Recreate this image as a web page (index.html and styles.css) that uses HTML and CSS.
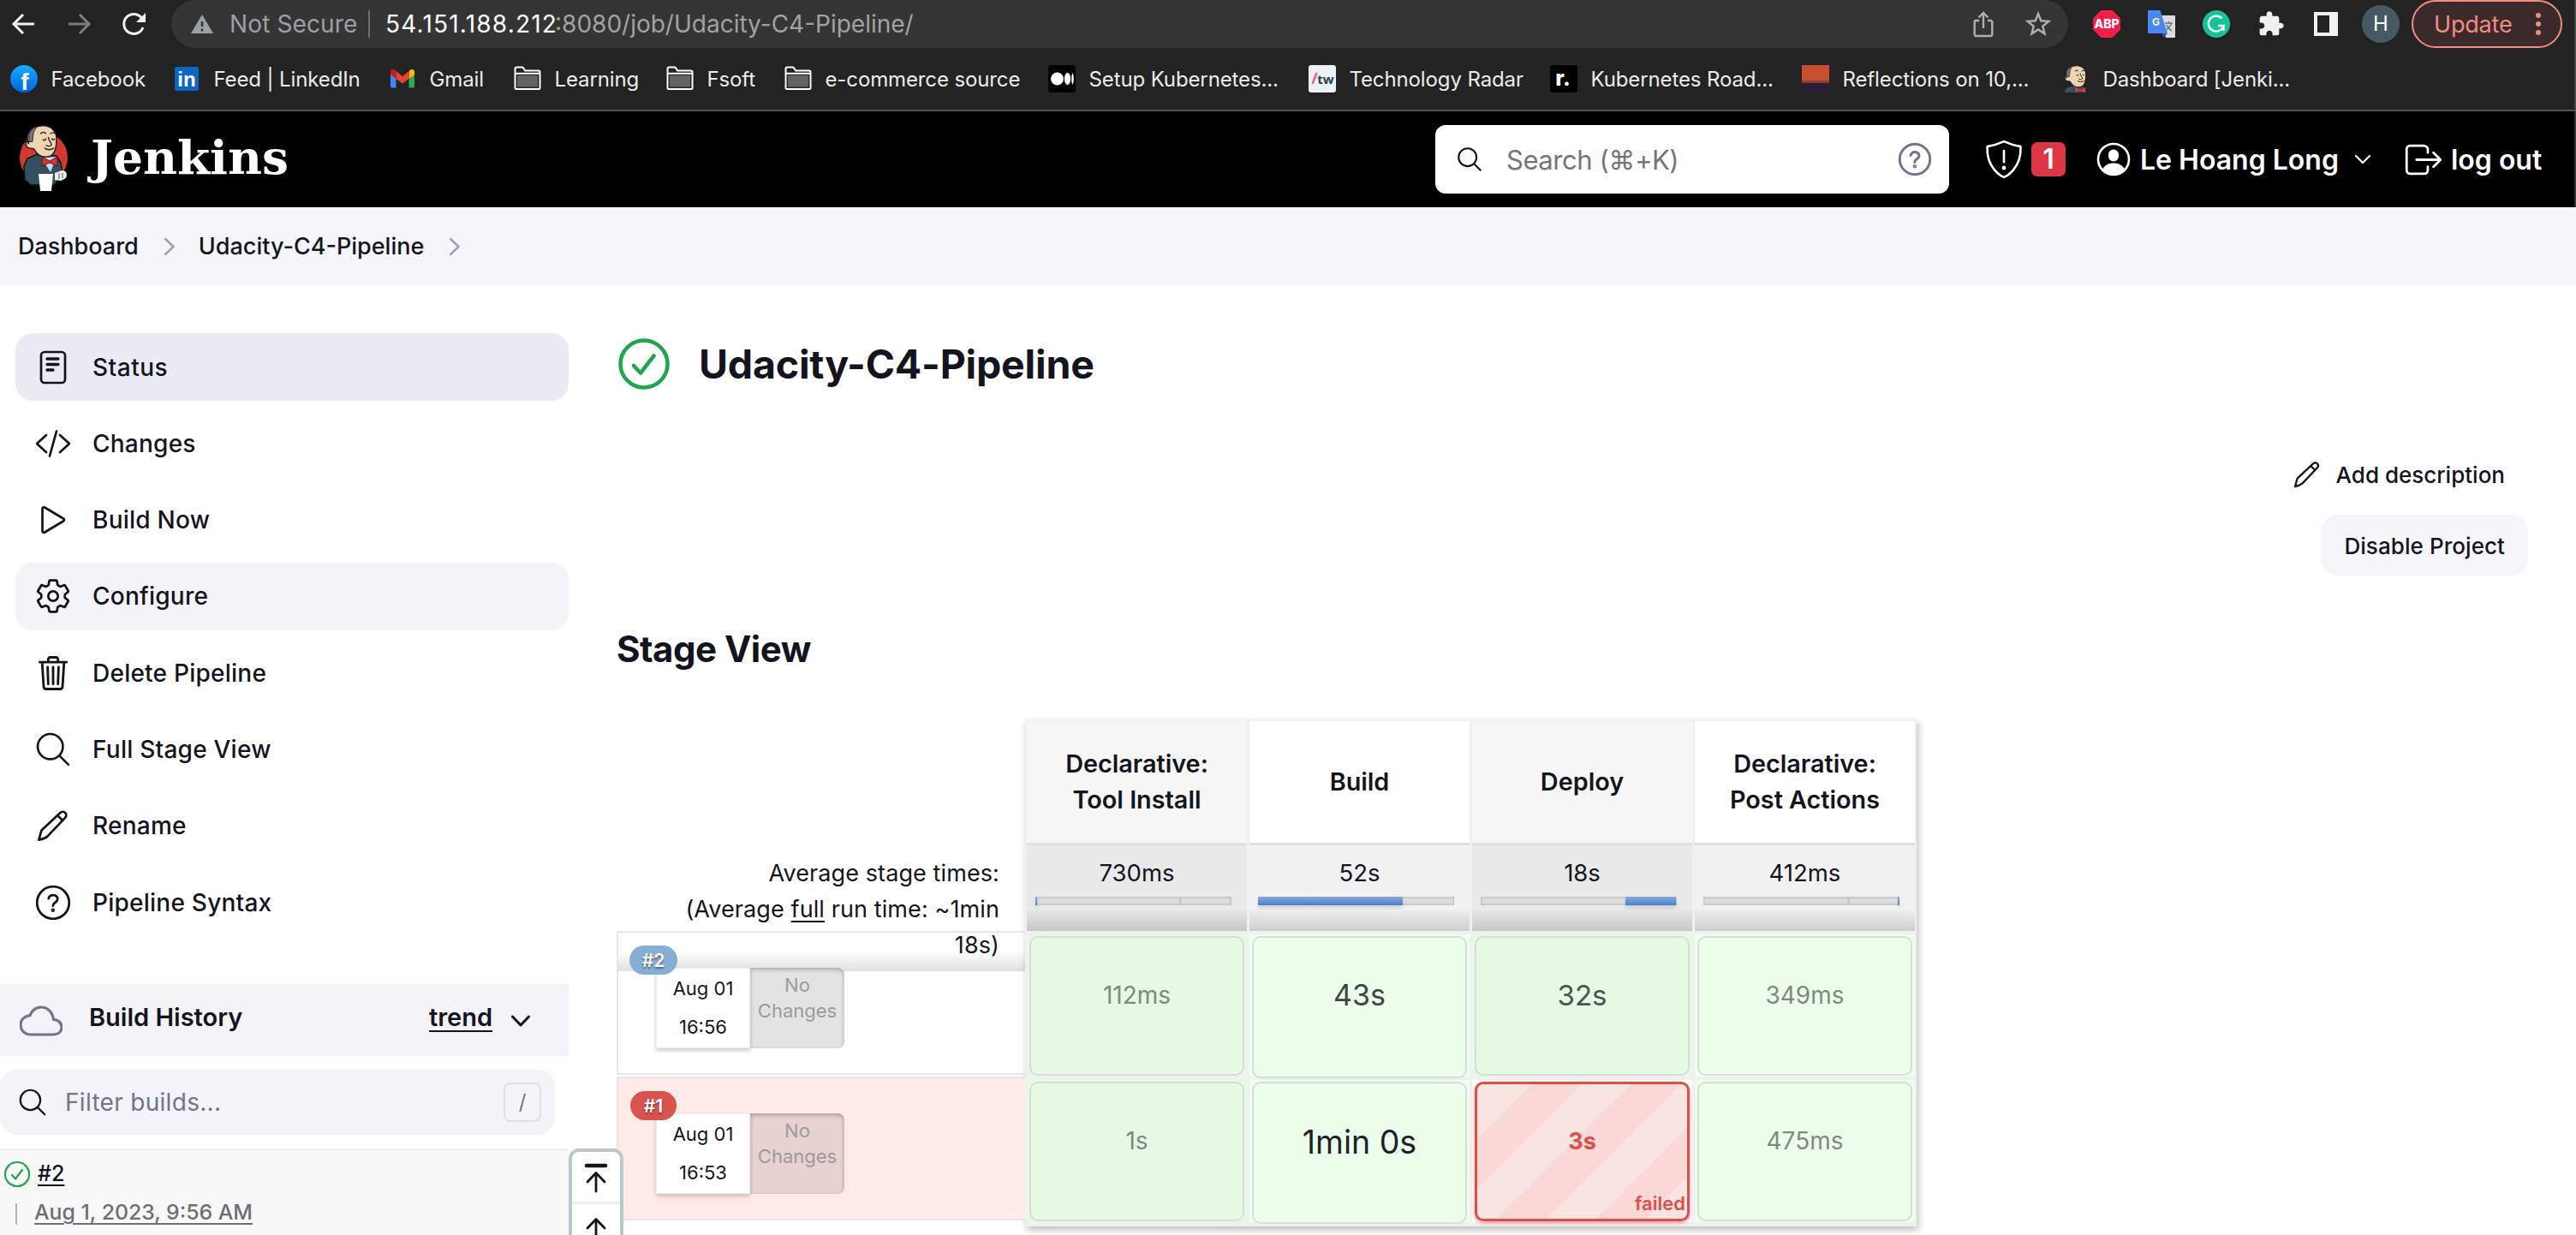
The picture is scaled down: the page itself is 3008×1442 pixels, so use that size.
FILE: index.html
```html
<!DOCTYPE html>
<html lang="en">
<head>
<meta charset="utf-8">
<title>Udacity-C4-Pipeline [Jenkins]</title>
<link rel="stylesheet" href="styles.css">
</head>
<body>
<svg class="defs" aria-hidden="true">
  <symbol id="search" viewBox="0 0 512 512"><path d="M221.09 64a157.09 157.09 0 10157.09 157.09A157.1 157.1 0 00221.09 64zM338.29 338.29L448 448"/></symbol>
  <symbol id="pencil" viewBox="0 0 32 32"><path d="M2 30l2.6-9.4L23 3.4c3.400-3.200 8 1.600 4.800 4.900L10.600 26.400C8 28.600 5 29.400 2 30zM20.300 6l5.200 5"/></symbol>
  <symbol id="help" viewBox="0 0 512 512"><path d="M256 40a216 216 0 10216 216A216 216 0 00256 40zM196 200s2-20 20-35c11-9 26-12 40-12 12 0 22 2 29 5 12 6 31 19 31 46 0 28-18 40-37 53s-25 24-25 41"/><circle cx="254" cy="356" r="10"/></symbol>
  <symbol id="folder" viewBox="0 0 32 32"><path d="M1.500 26.500V4.200c0-1 .7-1.700 1.700-1.700h6.300c.6 0 1 .2 1.400.7l2.300 3.300h15.600c1 0 1.700.7 1.700 1.700v18.300c0 1-.7 1.500-1.700 1.500H3.200c-1 0-1.700-.5-1.700-1.500z" fill="none" stroke="#fff" stroke-width="2"/><path d="M4 12h24v13.500H4z" fill="#636363"/><path d="M2 9.800h28" stroke="#fff" stroke-width="2"/></symbol>
  <symbol id="face" viewBox="0 0 60 42">
    <path d="M13 24C9 12 14 2 30 1c12-1 20 8 18 20 0 11-4 19-12 19-8 1-13-4-16-10l-6-1c-5-1-6-9-1-9z" fill="#eed5b0" stroke="#1b1b1b" stroke-width="1.500"/>
    <path d="M14 21C12 10 16 4 24 2c-4 5-5 8-5 11l-1 8z" fill="#777" stroke="#222" stroke-width="1"/>
    <path d="M28 11q4-4 7 0M40 11q4-3 6 0M31 18q3 3 4-1M42 17q3 3 4 0M38 15c0 5 5 8 4 10-1 2-6 2-7 0M33 29q6 4 12 0" fill="none" stroke="#222" stroke-width="1.500"/>
  </symbol>
</svg>

<header class="chrome">
  <div class="toolbar">
    <svg class="nav-icon" viewBox="0 0 32 32"><path d="M28 16H4.500M15 5L4 16l11 11"/></svg>
    <svg class="nav-icon nav-off" viewBox="0 0 32 32"><path d="M4 16h23.500M17 5l11 11-11 11"/></svg>
    <svg class="nav-icon" viewBox="0 0 32 32"><path d="M27 20A11.500 11.500 0 1 1 25 8.500"/><path d="M30 3v11H19z" fill="#f1f1f1" stroke="none"/></svg>
    <div class="omnibox">
      <svg class="warn" viewBox="0 0 28 24"><path d="M14 1L27 23H1z" fill="#9aa0a6"/><path d="M14 9v6M14 17.500v3" stroke="#353535" stroke-width="2.600"/></svg>
      <span class="insecure">Not Secure</span><span class="divider"></span>
      <span class="host">54.151.188.212</span><span class="path">:8080/job/Udacity-C4-Pipeline/</span>
      <span class="grow"></span>
      <svg class="omni-icon" viewBox="0 0 32 32"><path d="M11 12H7.500a1.800 1.800 0 0 0-1.800 1.800v14.400A1.800 1.800 0 0 0 7.500 30h17a1.800 1.800 0 0 0 1.800-1.800V13.800a1.800 1.800 0 0 0-1.800-1.800H21M16 21V3.500M10.500 8.500L16 3l5.500 5.500"/></svg>
      <svg class="omni-icon" viewBox="0 0 32 32"><path d="M16 4l3.300 8.300 8.900.6-6.900 5.700 2.200 8.700L16 22.500l-7.500 4.800 2.200-8.700-6.900-5.700 8.900-.6z"/></svg>
    </div>
    <div class="extensions">
      <svg viewBox="0 0 32 32"><path d="M9.500 0h13L32 9.500v13L22.500 32h-13L0 22.500v-13z" fill="#f41d4a"/><text x="16" y="21.300" textLength="29" lengthAdjust="spacingAndGlyphs" class="abp">ABP</text></svg>
      <svg viewBox="0 0 32 32"><path d="M15 6h16a1 1 0 0 1 1 1v24a1 1 0 0 1-1 1H21z" fill="#dcdcdc"/><path d="M17 27h6l-5 5z" fill="#3450b8"/><path d="M1 0h13.500L23 27H1a1 1 0 0 1-1-1V1a1 1 0 0 1 1-1z" fill="#4a86f0"/><text x="9.500" y="18" class="gt">G</text><path d="M20 15h9M24.500 13v2M27.500 15c-1 4-3.500 6-6 8M22 17c1 3 3 5 6 7" fill="none" stroke="#5d7d88" stroke-width="1.500"/></svg>
      <svg viewBox="0 0 32 32"><circle cx="16" cy="16" r="16" fill="#15c39a"/><path d="M22.500 9.500A9 9 0 1 0 24.500 18H18M24.500 18v6" fill="none" stroke="#fff" stroke-width="2.300"/></svg>
      <svg viewBox="0 0 24 24"><path fill="#f1f1f1" d="M20.500 11H19V7c0-1.100-.9-2-2-2h-4V3.500C13 2.120 11.880 1 10.500 1S8 2.120 8 3.500V5H4c-1.100 0-1.990.9-1.990 2v3.800H3.500c1.490 0 2.700 1.210 2.700 2.700s-1.210 2.700-2.700 2.700H2V20c0 1.100.9 2 2 2h3.800v-1.500c0-1.490 1.210-2.700 2.700-2.700 1.490 0 2.700 1.210 2.700 2.700V22H17c1.100 0 2-.9 2-2v-4h1.500c1.380 0 2.500-1.120 2.500-2.500S21.880 11 20.500 11z"/></svg>
      <svg viewBox="0 0 32 32"><path d="M2 2h28v28H2zM6 6v20h14V6z" fill="#f1f1f1" fill-rule="evenodd"/></svg>
    </div>
    <span class="avatar">H</span>
    <div class="update"><span>Update</span><svg viewBox="0 0 8 28"><circle cx="4" cy="4" r="3"/><circle cx="4" cy="14" r="3"/><circle cx="4" cy="24" r="3"/></svg></div>
  </div>
  <nav class="bookmarks">
    <a><svg viewBox="0 0 32 32"><defs><linearGradient id="fb" x2="0" y2="1"><stop stop-color="#18acfe"/><stop offset="1" stop-color="#0163e0"/></linearGradient></defs><circle cx="16" cy="16" r="16" fill="url(#fb)"/><text x="17" y="29" class="fbf">f</text></svg><span>Facebook</span></a>
    <a><svg viewBox="0 0 32 32"><rect x="2" y="2" width="28" height="28" rx="2" fill="#0a66c2"/><text x="16" y="25" class="lin">in</text></svg><span>Feed | LinkedIn</span></a>
    <a><svg viewBox="0 0 32 32"><path d="M2 8v16.500c0 1.300.7 2 2 2h4.500V13z" fill="#4285f4"/><path d="M30 8v16.500c0 1.300-.7 2-2 2h-4.500V13z" fill="#34a853"/><path d="M23.500 8v8L30 11V8c0-3-3.500-4-5.500-2z" fill="#fbbc04"/><path d="M8.500 16V7l7.500 6 7.500-6v9L16 21.500z" fill="#ea4335"/><path d="M2 8v3l6.500 5V7L7.500 6C5.500 4 2 5 2 8z" fill="#c5221f"/></svg><span>Gmail</span></a>
    <a><svg><use href="#folder"/></svg><span>Learning</span></a>
    <a><svg><use href="#folder"/></svg><span>Fsoft</span></a>
    <a><svg><use href="#folder"/></svg><span>e-commerce source</span></a>
    <a><svg viewBox="0 0 32 32"><rect width="32" height="32" rx="3"/><g fill="#fff"><circle cx="10.500" cy="16" r="7.500"/><ellipse cx="22.500" cy="16" rx="3.600" ry="7"/><ellipse cx="28.500" cy="16" rx="1.300" ry="6.500"/></g></svg><span>Setup Kubernetes...</span></a>
    <a><svg viewBox="0 0 32 32"><rect width="32" height="32" rx="3" fill="#edf1f3"/><path d="M4.500 22L9.500 9" stroke="#f2617a" stroke-width="2.500"/><text x="20" y="22" class="tw">tw</text></svg><span>Technology Radar</span></a>
    <a><svg viewBox="0 0 32 32"><rect width="32" height="32" rx="3"/><text x="15" y="24" class="rd">r.</text></svg><span>Kubernetes Road...</span></a>
    <a><svg viewBox="0 0 32 32"><rect width="32" height="21" fill="#c5502f"/><rect y="21" width="32" height="11" fill="#2a1d38"/><rect y="18" width="32" height="3" fill="#8c3c2c"/></svg><span>Reflections on 10,...</span></a>
    <a><svg viewBox="0 0 32 32"><path d="M3 32c0-5 4-7 10-7h8c5 0 7 3 7 7z" fill="#335061"/><use href="#face" x="-3" y="0" width="38" height="27"/><path d="M15 26l6 2.500 6-2.500v6l-6-2-6 2z" fill="#d33833"/></svg><span>Dashboard [Jenki...</span></a>
  </nav>
</header>

<header class="jenkins">
  <svg class="butler" viewBox="0 0 66 84">
    <ellipse cx="33" cy="40" rx="28" ry="29" fill="#d33833"/>
    <path d="M10 50l4-9 12-5 22 2 5 8 2 14-10 12H18l-7-6z" fill="#335061" stroke="#111" stroke-width="1.500"/>
    <path d="M30 40l18-1-7 18z" fill="#c7dcea"/>
    <use href="#face" x="3" y="2" width="56" height="39"/>
    <path d="M31 39l9 5 9-5v11l-9-4-9 4z" fill="#d33833" stroke="#400" stroke-width=".8"/>
    <path d="M27 59h17l-2 20H29z" fill="#fff"/><path d="M46 58l8-3c5 0 7 3 5 9l-6 3-7-1z" fill="#eee"/><path d="M51 58v7M55 58v6" stroke="#555"/>
  </svg>
  <span class="wordmark">Jenkins</span>
  <div class="searchbox"><svg class="ico s-ico"><use href="#search"/></svg><span>Search (⌘+K)</span><svg class="ico h-ico"><use href="#help"/></svg></div>
  <svg class="ico shield" viewBox="0 0 512 512"><path d="M463.100 97.370C373.680 81.330 336.710 69.450 256 33c-80.710 36.450-117.680 48.330-207.100 64.370C32.700 374.130 240.580 472.790 256 479c15.420-6.210 223.300-104.870 207.100-381.630zM256 150v140"/><circle cx="256" cy="362" r="12"/></svg>
  <span class="alert">1</span>
  <svg class="person" viewBox="0 0 40 40"><circle cx="20" cy="20" r="18" fill="none" stroke="#fff" stroke-width="2.600"/><ellipse cx="20" cy="15.500" rx="6.200" ry="7"/><path d="M7 32c2-5 7-7.500 13-7.500S31 27 33 32c-7 8.500-19 8.500-26 0z"/></svg>
  <span class="user">Le Hoang Long</span>
  <svg class="ico h-chev" viewBox="0 0 18 10"><path d="M1 1l8 8 8-8"/></svg>
  <svg class="ico logout" viewBox="52 88 408 336"><path d="M304 336v40a40 40 0 01-40 40H104a40 40 0 01-40-40V136a40 40 0 0140-40h152c22.090 0 48 17.910 48 40v40M368 336l80-80-80-80M176 256h264"/></svg>
  <span class="user">log out</span>
</header>

<nav class="crumbs">
  <span>Dashboard</span><svg class="ico" viewBox="0 0 14 22"><path d="M2 2l9.500 9L2 20"/></svg>
  <span>Udacity-C4-Pipeline</span><svg class="ico" viewBox="0 0 14 22"><path d="M2 2l9.500 9L2 20"/></svg>
</nav>

<div class="page">
  <aside>
    <nav class="tasks">
      <a class="active"><svg class="ico" viewBox="0 0 40 40"><rect x="6" y="2" width="28" height="36" rx="4"/><path d="M13 10h13M13 16.500h13M13 23h7" stroke-width="3.300"/></svg>Status</a>
      <a><svg class="ico" viewBox="0 0 40 40"><path d="M12 10L1 20l11 10M28 10l11 10-11 10M24 5.500l-8 29"/></svg>Changes</a>
      <a><svg class="ico" viewBox="0 0 40 40"><path d="M7.500 7v26c0 1.500 1.400 2.300 2.700 1.500L32 21.500c1.200-.8 1.200-2.300 0-3L10.200 5.500C8.900 4.700 7.500 5.500 7.500 7z"/></svg>Build Now</a>
      <a class="hover"><svg class="ico" viewBox="22 22 468 468"><circle cx="256" cy="256" r="66"/><path d="M416.390 256a154.340 154.340 0 01-1.530 20.790l45.210 35.460a10.810 10.810 0 012.450 13.750l-42.770 74a10.810 10.810 0 01-13.140 4.590l-44.900-18.080a16.110 16.110 0 00-15.170 1.750A164.480 164.480 0 01325 400.800a15.940 15.940 0 00-8.820 12.140l-6.730 47.890a11.080 11.080 0 01-10.680 9.170h-85.540a11.110 11.110 0 01-10.690-8.870l-6.720-47.820a16.070 16.070 0 00-9-12.220 155.300 155.300 0 01-21.460-12.570 16 16 0 00-15.110-1.710l-44.890 18.070a10.810 10.810 0 01-13.140-4.580l-42.770-74a10.800 10.800 0 012.450-13.750l38.210-30a16.050 16.050 0 006-14.080c-.36-4.170-.58-8.330-.58-12.500s.21-8.270.58-12.350a16 16 0 00-6.070-13.940l-38.190-30A10.810 10.810 0 0149.480 186l42.770-74a10.810 10.810 0 0113.140-4.590l44.900 18.080a16.110 16.110 0 0015.170-1.750A164.480 164.480 0 01187 111.200a15.940 15.940 0 008.820-12.140l6.730-47.890A11.080 11.080 0 01213.230 42h85.540a11.110 11.110 0 0110.690 8.870l6.720 47.820a16.070 16.070 0 009 12.220 155.300 155.300 0 0121.460 12.570 16 16 0 0015.110 1.710l44.890-18.070a10.810 10.810 0 0113.140 4.580l42.770 74a10.800 10.800 0 01-2.450 13.750l-38.210 30a16.050 16.050 0 00-6.050 14.080c.33 4.140.55 8.300.55 12.470z"/></svg>Configure</a>
      <a><svg class="ico" viewBox="31 31 450 450"><path d="M112 112l20 320c.95 18.490 14.400 32 32 32h184c17.670 0 30.870-13.510 32-32l20-320M80 112h352M192 112V72a23.930 23.930 0 0124-24h80a23.930 23.930 0 0124 24v40M256 176v224M184 176l8 224M328 176l-8 224"/></svg>Delete Pipeline</a>
      <a><svg class="ico" viewBox="42 42 428 428"><path d="M221.090 64a157.090 157.090 0 10157.090 157.090A157.100 157.100 0 00221.090 64zM338.290 338.290L448 448"/></svg>Full Stage View</a>
      <a><svg class="ico"><use href="#pencil" x="1" y="1" width="38" height="38"/></svg>Rename</a>
      <a><svg class="ico" viewBox="26 26 460 460"><use href="#help" width="512" height="512"/></svg>Pipeline Syntax</a>
    </nav>
    <div class="history-head">
      <svg class="ico" viewBox="6 84 500 344"><path d="M400 240c-8.890-89.540-71-144-144-144-69 0-113.440 48.200-128 96-60 6-112 43.590-112 112 0 66 54 112 120 112h260c55 0 100-27.440 100-88 0-59.820-53-85.760-96-88z"/></svg>
      <b>Build History</b><b class="trend">trend</b>
      <svg class="ico chev" viewBox="0 0 22 14"><path d="M1.500 2l9.500 10 9.500-10"/></svg>
    </div>
    <div class="filter"><svg class="ico"><use href="#search"/></svg><span>Filter builds...</span><kbd>/</kbd></div>
    <div class="builds">
      <div class="build"><svg class="ico ok" viewBox="0 0 32 32"><circle cx="16" cy="16" r="14"/><path d="M10 17l4 4.500 8-10.500"/></svg><u>#2</u></div>
      <div class="when"><i></i><u>Aug 1, 2023, 9:56 AM</u></div>
    </div>
  </aside>

  <main>
    <div class="title"><svg class="ico ok" viewBox="0 0 60 60"><circle cx="30" cy="30" r="27.500"/><path d="M18 32l8 8.500 15.500-20"/></svg><h1>Udacity-C4-Pipeline</h1></div>
    <div class="actions">
      <a class="add"><svg class="ico"><use href="#pencil"/></svg>Add description</a>
      <a class="disable">Disable Project</a>
    </div>
    <h2>Stage View</h2>
    <div class="stage-view">
      <div class="runs">
        <div class="averages">Average stage times:<br>(Average <u>full</u> run time: ~1min<br>18s)</div>
        <div class="run"><span class="tag">#2</span><div class="date">Aug 01<br>16:56</div><div class="nochange">No<br>Changes</div></div>
        <div class="run failed-run"><span class="tag">#1</span><div class="date">Aug 01<br>16:53</div><div class="nochange">No<br>Changes</div></div>
      </div>
      <div class="stages">
        <div class="stage odd">
          <div class="name">Declarative:<br>Tool Install</div>
          <div class="avg">730ms<div class="bar"><i style="left:0;width:2px"></i><s style="left:168px"></s></div></div>
          <div class="cell"><div class="box">112ms</div></div>
          <div class="cell"><div class="box">1s</div></div>
        </div>
        <div class="stage">
          <div class="name">Build</div>
          <div class="avg">52s<div class="bar"><i style="left:0;width:169px"></i></div></div>
          <div class="cell"><div class="box tall t34">43s</div></div>
          <div class="cell"><div class="box tall t38">1min 0s</div></div>
        </div>
        <div class="stage odd">
          <div class="name">Deploy</div>
          <div class="avg">18s<div class="bar"><i style="left:169px;width:59px"></i></div></div>
          <div class="cell"><div class="box t32">32s</div></div>
          <div class="cell fail"><div class="box">3s<em>failed</em></div></div>
        </div>
        <div class="stage">
          <div class="name">Declarative:<br>Post Actions</div>
          <div class="avg">412ms<div class="bar"><s style="left:168px"></s><i style="left:227px;width:2px"></i></div></div>
          <div class="cell"><div class="box">349ms</div></div>
          <div class="cell"><div class="box">475ms</div></div>
        </div>
      </div>
    </div>
  </main>
</div>

<div class="scroller">
  <svg class="ico" viewBox="0 0 30 34"><path d="M4 3h22" stroke-width="4.500"/><path d="M15 33V12M5 22l10-10.500L25 22"/></svg>
  <hr>
  <svg class="ico" viewBox="0 0 30 34"><path d="M15 33V4M5 14L15 3.500 25 14"/></svg>
</div>
</body>
</html>
```
FILE: styles.css
```css
*{box-sizing:border-box}
html,body{height:1442px;overflow:hidden}
body{margin:0;background:#fff;color:#14141f;font-family:Inter,"Liberation Sans","Noto Sans CJK SC",sans-serif;font-size:28px;white-space:nowrap;position:relative}
svg{flex:none;display:block}
.defs{position:absolute;width:0;height:0}
.ico{fill:none;stroke:currentColor;stroke-linecap:round;stroke-linejoin:round}
.grow{flex:1}

/* browser chrome */
.chrome{height:130px;background:#232323;border-bottom:2px solid #535353;border-right:2px solid #4a4a4a}
.toolbar{display:flex;align-items:center;height:56px;padding-left:12px}
.nav-icon{width:32px;height:32px;margin-right:32px;fill:none;stroke:#f1f1f1;stroke-width:3}
.nav-off{stroke:#7d7d7d}
.omnibox{display:flex;align-items:center;width:2215px;height:56px;margin-left:-4px;padding:0 19px 0 22px;background:#353535;border-radius:28px;color:#9aa0a6}
.warn{width:28px;height:24px;margin-right:18px}
.insecure{width:162px;letter-spacing:.13px}
.divider{width:2px;height:32px;background:#6e6e6e;margin-right:18px}
.host{color:#fff;letter-spacing:1.2px;width:200px}
.path{color:#a2a2a2;margin-left:-2px}
.omni-icon{width:32px;height:32px;margin-left:32px;fill:none;stroke:#b0b0b0;stroke-width:2.400}
.extensions{display:flex;gap:32px;margin-left:29px}
.extensions svg{width:32px;height:32px}
.abp{font:800 14px Inter,sans-serif;fill:#fff;text-anchor:middle}
.gt{font:700 12px Inter,sans-serif;fill:#fff;text-anchor:middle}
.avatar{width:44px;height:44px;border-radius:50%;background:#455a64;color:#fff;font-size:24px;line-height:44px;text-align:center;margin-left:26px}
.update{display:flex;align-items:center;width:176px;height:56px;margin-left:14px;padding-left:24px;border:2px solid #f28b82;border-radius:28px;background:#3a2a2a;color:#f28b82;font-size:27px;letter-spacing:-.2px}
.update svg{width:8px;height:28px;margin-left:27px;fill:#f28b82}
.bookmarks{display:grid;grid-template-columns:190px 252px 146px 178px 138px 308px 304px 282px 294px 304px 300px;height:72px;padding-left:12px;align-items:center;font-size:24px;color:#ececec}
.bookmarks a{display:flex;align-items:center;gap:15.500px}
.bookmarks svg{width:32px;height:32px}
.bookmarks span{letter-spacing:-.12px}
.fbf{font:700 28px "Liberation Sans",sans-serif;fill:#fff;text-anchor:middle}
.lin{font:700 24px "Liberation Sans",sans-serif;fill:#fff;text-anchor:middle}
.tw{font:700 15px "Open Sans",sans-serif;fill:#1d4355;text-anchor:middle}
.rd{font:800 25px Inter,sans-serif;fill:#fff;text-anchor:middle}

/* Jenkins header */
.jenkins{display:flex;align-items:center;height:112px;background:#000;color:#fff;padding-left:18px;border-right:2px solid #333}
.butler{width:66px;height:84px}
.wordmark{width:1570px;margin-left:22px;padding-bottom:4px;font:700 55px/80px "DejaVu Serif",serif}
.searchbox{display:flex;align-items:center;width:600px;height:80px;background:#fff;border-radius:12px;color:#757575;font-size:31px}
.searchbox span{width:453px;margin-left:26px;letter-spacing:-.45px}
.s-ico{width:34px;height:34px;margin-left:23px;color:#14141f;stroke-width:32}
.h-ico{width:42px;height:42px;color:#73738c;stroke-width:36}
.searchbox .h-ico{margin-left:3px}
.shield{width:48px;height:48px;margin-left:40px;stroke-width:28}
.alert{width:40px;height:40px;margin-left:8px;border-radius:7px;background:#dc3545;font-weight:600;font-size:32px;line-height:40px;text-align:center}
.person{width:40px;height:40px;margin-left:36px;fill:#fff}
.user{font-size:32px;font-weight:600;margin-left:11px}
.h-chev{width:18px;height:10px;margin:0 41px 0 19px;stroke-width:2.200;overflow:visible}
.logout{width:42px;height:35px;stroke-width:27;overflow:visible}

.crumbs{display:flex;align-items:center;height:91px;padding-left:21px;background:#f5f5fa;font-size:27px;font-weight:450}
.crumbs svg{width:14px;height:22px;margin:0 27px 0 29px;color:#a0a0b4;stroke-width:2.500}

.page{display:flex}
aside{width:664px;padding-top:56px}
.tasks{display:flex;flex-direction:column;gap:10.330px;padding-left:18px}
.tasks a{display:flex;align-items:center;height:79px;padding-left:24px;border-radius:20px;font-weight:450;letter-spacing:.24px}
.tasks svg{width:40px;height:40px;margin-right:26px;stroke-width:2.700}
.tasks svg[viewBox="22 22 468 468"],.tasks svg[viewBox="26 26 460 460"],.tasks svg[viewBox="31 31 450 450"]{stroke-width:32}
.tasks svg[viewBox="42 42 428 428"]{stroke-width:28}
.tasks svg use{stroke-width:inherit}
.tasks a:nth-child(7) svg{stroke-width:2.300}
.tasks .active{background:#ebecf3;font-weight:550;letter-spacing:.5px}
.tasks .hover{background:#f3f3f8}
.history-head{display:flex;align-items:center;height:84px;margin-top:56px;padding-left:23px;background:#f3f3f8;font-size:29px;padding-bottom:7px}
.history-head svg:first-child{width:50px;height:36px;color:#73738c;stroke-width:32;margin-top:9px}
.history-head b{font-weight:600}
.history-head b:nth-of-type(1){width:397px;margin-left:31px}
.trend{text-decoration:underline;text-decoration-thickness:2px;text-underline-offset:5px}
.chev{width:22px;height:14px;margin:8px 0 0 22px;stroke-width:3}
.filter{display:flex;align-items:center;width:648px;height:76px;margin:16px 0;border-radius:20px;background:#f3f3f8;color:#73738c}
.filter svg{width:38px;height:38px;margin-left:19px;color:#14141f;stroke-width:30}
.filter span{width:512px;margin-left:19px;letter-spacing:.3px}
.filter kbd{width:44px;height:46px;border:2px solid #dfdfec;border-radius:8px;font:24px/41px Inter,sans-serif;text-align:center}
.builds{height:120px;border-top:2px solid #f1f1f4;background:#f8f8f8;padding-top:8px}
.build{display:flex;align-items:center;height:38px;font-size:25px;font-weight:500}
.build svg{width:32px;height:32px;margin:1px 8px 0 4px;stroke-width:2.200}
.ok{color:#1ea64b}
u{text-decoration-thickness:2px;text-underline-offset:4px}
.when{display:flex;align-items:center;height:52px;font-size:24.800px;font-weight:450;color:#6e6e74}
.when i{width:2px;height:25px;margin:4px 20px 0 18px;background:#a9b4bc}

main{flex:1;margin-left:54px;padding:62px 56px 0 0}
.title{display:flex;align-items:center;height:60px}
.title svg{width:60px;height:60px;margin:0 34px 0 4px;stroke-width:4.500}
h1,h2{margin:0}
h1{font-size:46.500px;font-weight:700;line-height:60px;letter-spacing:-.2px}
.actions{display:flex;flex-direction:column;align-items:flex-end;gap:12px;margin-top:63px;font-size:26px;font-weight:450}
.actions a{display:flex;align-items:center;height:71px;padding:1px 27px 0}
.add svg{width:32px;height:32px;margin-right:18px;stroke-width:2.300}
.disable{background:#f6f6fa;border-radius:20px;letter-spacing:.07px}
h2{margin-top:59px;padding-left:2px;font-size:42px;font-weight:700;line-height:54px;letter-spacing:-.5px}

/* stage view */
.stage-view{display:flex;margin-top:55px;padding-left:2px}
.runs{width:477px}
.averages{height:138px;margin-top:156px;padding:3px 30px 0 0;font-size:27px;line-height:42px;letter-spacing:.1px;text-align:right;background:linear-gradient(#fff0,#0000001f) bottom/100% 24px no-repeat}
.run{position:relative;display:flex;height:168px;padding:41px 0 0 44px;border:2px solid #e6e6e6;border-right:0;font-size:22px;text-align:center}
.averages+.run{margin-top:-47px}
.failed-run{margin-top:2px;background:#ffeae8}
.tag{position:absolute;left:13px;top:15px;z-index:1;width:56px;height:34px;border-radius:17px;background:#86add3;color:#fff;font-size:21px;font-weight:600;line-height:35px;text-shadow:0 2px 2px #0006}
.failed-run .tag{background:#d9534f;left:14px;width:54px}
.date{width:110px;height:94px;padding-top:1px;line-height:45px;background:#fff;border:1px solid #eee;box-shadow:0 3px 5px #0003}
.nochange{width:110px;height:94px;padding-top:5px;line-height:30px;color:#9b9b9b;background:#e3e3e3;border-radius:0 8px 8px 0;box-shadow:inset 0 2px 5px #0004}
.failed-run .nochange{background:#e6d2d0}
.stages{display:flex;gap:3px;height:592px;background:#f0f0f3;padding:2px;box-shadow:2px 4px 8px #0004}
.stage{width:257px;background:#f0f0f0}
.name{display:flex;align-items:center;justify-content:center;height:142px;background:#fff;font-size:28.800px;font-weight:600;line-height:42px;text-align:center}
.odd .name{background:#f7f7f7}
.avg{height:103px;border-top:3px solid #dfdfdf;padding-top:11px;line-height:42px;font-size:27.500px;text-align:center;background:linear-gradient(#0000,#00000026) bottom/100% 26px no-repeat #f1f1f1}
.odd .avg{background-color:#e9e9e9}
.bar{position:relative;width:229px;height:10px;margin:7px auto 0 10px;background:#dedede;box-shadow:inset 0 0 3px 1px #bbb}
.bar i,.bar s{position:absolute;top:0;height:10px}
.bar i{background:linear-gradient(#84abd8,#4a7fd0);box-shadow:0 3px 4px #0002}
.bar s{width:3px;background:#c8c8c8}
.cell{height:166px;margin-top:4px;padding:2px 3px;background:#edffea}
.odd .cell{background:#e6f9e2}
.box{position:relative;height:163px;border:2px solid #d9dcda;border-radius:10px;font-size:28px;line-height:134px;text-align:center;color:#7f8a80}
.tall{height:166px}
.t32{font-size:33px;color:#4c5550}
.t34{font-size:34px;color:#3c4642}
.t38{font-size:37.500px;color:#1b222a;line-height:137px}
.odd .fail{background:#fff}
.fail .box{border:3px solid #dc4f4b;background:repeating-linear-gradient(135deg,#fbd7d5 0 4px,#fae4e1 4px 45px,#fbd7d5 45px 82px);color:#dc4f4b;font-weight:700;line-height:134px;font-size:27px;box-shadow:0 2px 4px #d006}
.fail em{position:absolute;right:2px;bottom:4px;font:600 22px/28px Inter,sans-serif}

.scroller{position:absolute;left:664px;top:1341px;width:64px;height:140px;border:4px solid #bcc7cc;border-radius:12px;background:#fff}
.scroller svg{width:30px;height:36px;margin:12px auto 0;stroke-width:2.800}
.scroller hr{height:3px;margin:10px 0 0;border:0;background:#ededed}
.scroller svg+hr+svg{margin-top:13px}
```
